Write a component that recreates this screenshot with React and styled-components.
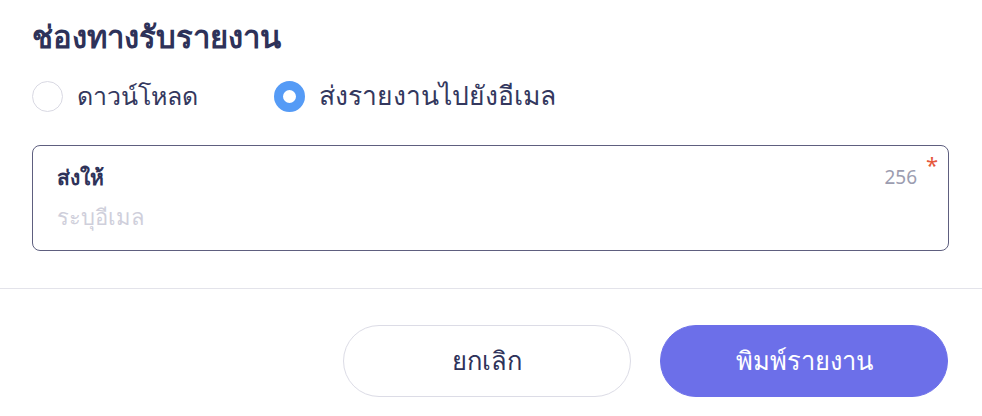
import React, { useState } from 'react'
import styled, { createGlobalStyle } from 'styled-components'

const GlobalStyle = createGlobalStyle`
  html, body {
    margin: 0;
    padding: 0;
    background: #ffffff;
    font-family: 'Noto Sans', 'DejaVu Sans', sans-serif;
  }
`

export default function App() {
  const [channel, setChannel] = useState('email')
  return (
    <>
      <GlobalStyle />
      <Dialog>
        <Body>
          <Title>ช่องทางรับรายงาน</Title>
          <RadioGroup>
            <RadioOption onClick={() => setChannel('download')}>
              <RadioCircle checked={channel === 'download'} />
              <RadioLabel>ดาวน์โหลด</RadioLabel>
            </RadioOption>
            <RadioOption onClick={() => setChannel('email')}>
              <RadioCircle checked={channel === 'email'} />
              <RadioLabel wide>ส่งรายงานไปยังอีเมล</RadioLabel>
            </RadioOption>
          </RadioGroup>
          <Field>
            <FieldHead>
              <FieldLabel>ส่งให้</FieldLabel>
              <Counter>256</Counter>
            </FieldHead>
            <FieldInput placeholder="ระบุอีเมล" />
            <Required>*</Required>
          </Field>
        </Body>
        <Footer>
          <Button>ยกเลิก</Button>
          <Button primary>พิมพ์รายงาน</Button>
        </Footer>
      </Dialog>
    </>
  )
}

const Dialog = styled.div`
  display: flex;
  flex-direction: column;
  width: 982px;
  height: 416px;
  background: #fff;
  color: #2e3259;
`
const Body = styled.div`
  display: flex;
  flex-direction: column;
  padding: 14px 33px 37px 32px;
  border-bottom: 1px solid #e3e3ea;
`
const Title = styled.h2`
  margin: 0;
  font-size: 31px;
  font-weight: 700;
  line-height: 44px;
  color: #2e3259;
`
const RadioGroup = styled.div`
  display: flex;
  align-items: center;
  gap: 76px;
  margin-top: 18px;
  height: 40px;
`
const RadioOption = styled.label`
  display: flex;
  align-items: center;
  gap: 14px;
  cursor: pointer;
`
const RadioCircle = styled.span`
  box-sizing: border-box;
  width: 31px;
  height: 31px;
  border-radius: 50%;
  border: ${p => (p.checked ? '9px solid #559bf6' : '1px solid #d9d9e3')};
  background: #fff;
`
const RadioLabel = styled.span`
  font-size: ${p => (p.wide ? '26.5px' : '25px')};
  color: #34385e;
`
const Field = styled.div`
  position: relative;
  display: flex;
  flex-direction: column;
  margin-top: 29px;
  height: 106px;
  box-sizing: border-box;
  border: 1px solid #5e5f7f;
  border-radius: 8px;
  padding: 14px 31px 0 24px;
`
const FieldHead = styled.div`
  display: flex;
  justify-content: space-between;
  align-items: center;
  height: 34px;
`
const FieldLabel = styled.span`
  font-size: 21px;
  font-weight: 700;
  color: #2e3259;
`
const Counter = styled.span`
  font-size: 19px;
  color: #9c9db0;
`
const FieldInput = styled.input`
  border: none;
  outline: none;
  padding: 0;
  margin-top: 7px;
  font-family: inherit;
  font-size: 22px;
  color: #2e3259;
  background: transparent;
  &::placeholder {
    color: #cfcfdb;
  }
`
const Required = styled.span`
  position: absolute;
  top: 3px;
  right: 10px;
  font-size: 22px;
  color: #e5583c;
`
const Footer = styled.div`
  display: flex;
  justify-content: flex-end;
  gap: 29px;
  padding: 36px 34px 0 0;
`
const Button = styled.button`
  width: 288px;
  height: 72px;
  border-radius: 36px;
  font-family: inherit;
  font-size: 25.5px;
  cursor: pointer;
  border: 1px solid ${p => (p.primary ? '#6c6fe9' : '#dcdce6')};
  background: ${p => (p.primary ? '#6c6fe9' : '#fff')};
  color: ${p => (p.primary ? '#fff' : '#2e3259')};
`
